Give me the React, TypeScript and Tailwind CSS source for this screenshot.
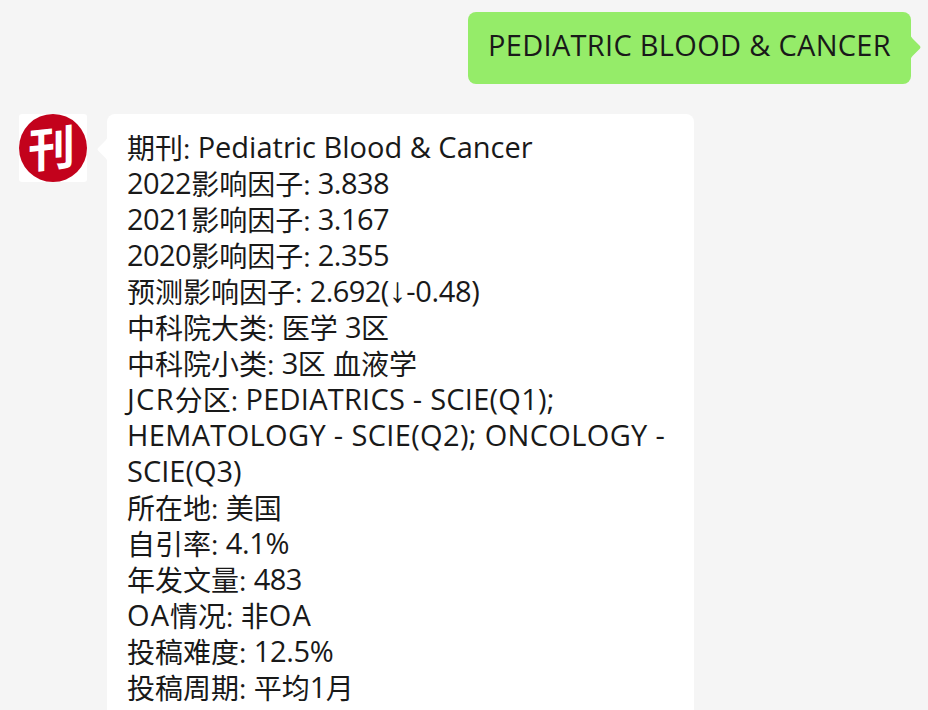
import clsx from "clsx"

type Run = { text: string; className?: string }

const cjk = "relative top-px"
const digits = "text-[29px] tracking-[-0.55px]"
const percent = "text-[29px] tracking-[-0.3px]"
const latin = "text-[29px]"
const oa = "text-[29px] tracking-[1.1px]"

const lines: Run[][] = [
  [{ text: "期刊: " }, { text: "Pediatric Blood & Cancer", className: latin }],
  [{ text: "2022", className: digits }, { text: "影响因子: " }, { text: "3.838", className: digits }],
  [{ text: "2021", className: digits }, { text: "影响因子: " }, { text: "3.167", className: digits }],
  [{ text: "2020", className: digits }, { text: "影响因子: " }, { text: "2.355", className: digits }],
  [
    { text: "预测影响因子: " },
    { text: "2.692(", className: digits },
    { text: "↓", className: "font-['Liberation_Sans',sans-serif] text-[35px] leading-5" },
    { text: "-0.48)", className: "text-[29px] tracking-[-0.35px]" },
  ],
  [{ text: "中科院大类: 医学 " }, { text: "3", className: digits }, { text: "区" }],
  [{ text: "中科院小类: " }, { text: "3", className: digits }, { text: "区 血液学" }],
  [
    { text: "JCR", className: "text-[29px] tracking-[1.3px]" },
    { text: "分区: " },
    { text: "PEDIATRICS - SCIE(Q1);", className: "text-[29px] tracking-[0.24px]" },
  ],
  [{ text: "HEMATOLOGY - SCIE(Q2); ONCOLOGY -", className: "text-[29px] tracking-[0.35px]" }],
  [{ text: "SCIE(Q3)", className: latin }],
  [{ text: "所在地: 美国" }],
  [{ text: "自引率: " }, { text: "4.1%", className: percent }],
  [{ text: "年发文量: " }, { text: "483", className: digits }],
  [{ text: "OA", className: oa }, { text: "情况: 非" }, { text: "OA", className: oa }],
  [{ text: "投稿难度: " }, { text: "12.5%", className: percent }],
  [{ text: "投稿周期: 平均" }, { text: "1", className: digits }, { text: "月" }],
]

function Avatar() {
  return (
    <div className="h-[68px] w-[68px] shrink-0 rounded-[3px] bg-white">
      <div className="flex h-full w-full items-center justify-center rounded-full bg-[#c3021c] pr-1 pb-1">
        <span className="rotate-[-6deg] skew-x-[-6deg] font-['Noto_Sans_CJK_SC',sans-serif] text-[47px] leading-[68px] font-bold text-white">
          刊
        </span>
      </div>
    </div>
  )
}

function Tail({ className }: { className: string }) {
  return (
    <svg viewBox="0 0 11 28" className={clsx("absolute h-7 w-[11px]", className)} fill="currentColor">
      <path d="M0 0 Q0.5 2.5 2.5 4.5 L10 12 Q11 13 10 14.5 L2.5 22 Q0.5 24 0 27Z" />
    </svg>
  )
}

export default function App() {
  return (
    <div className="h-[710px] w-[928px] overflow-hidden bg-[#f5f5f5] pt-3 font-['Open_Sans','Noto_Sans_CJK_SC',sans-serif] text-[28px] text-[#191919]">
      {/* Sent message */}
      <div className="flex justify-end pr-[17px]">
        <div className="relative h-[72px] w-[443px] rounded-lg bg-[#95ec69] pt-[15px] pl-5 leading-9">
          <p className="text-[29px] tracking-[0.3px] whitespace-nowrap">PEDIATRIC BLOOD & CANCER</p>
          <Tail className="top-[22px] left-full -ml-px text-[#95ec69]" />
        </div>
      </div>

      {/* Received message */}
      <div className="mt-[30px] flex pl-[19px]">
        <Avatar />
        <div className="relative ml-5 w-[587px] rounded-lg bg-white pt-[15px] pb-10 pl-5">
          <Tail className="top-[22px] right-full -mr-px -scale-x-100 text-white" />
          {lines.map((runs, i) => (
            <p key={i} className="h-9 leading-9 whitespace-pre">
              {runs.map((run, j) => (
                <span key={j} className={run.className ?? cjk}>
                  {run.text}
                </span>
              ))}
            </p>
          ))}
        </div>
      </div>
    </div>
  )
}
